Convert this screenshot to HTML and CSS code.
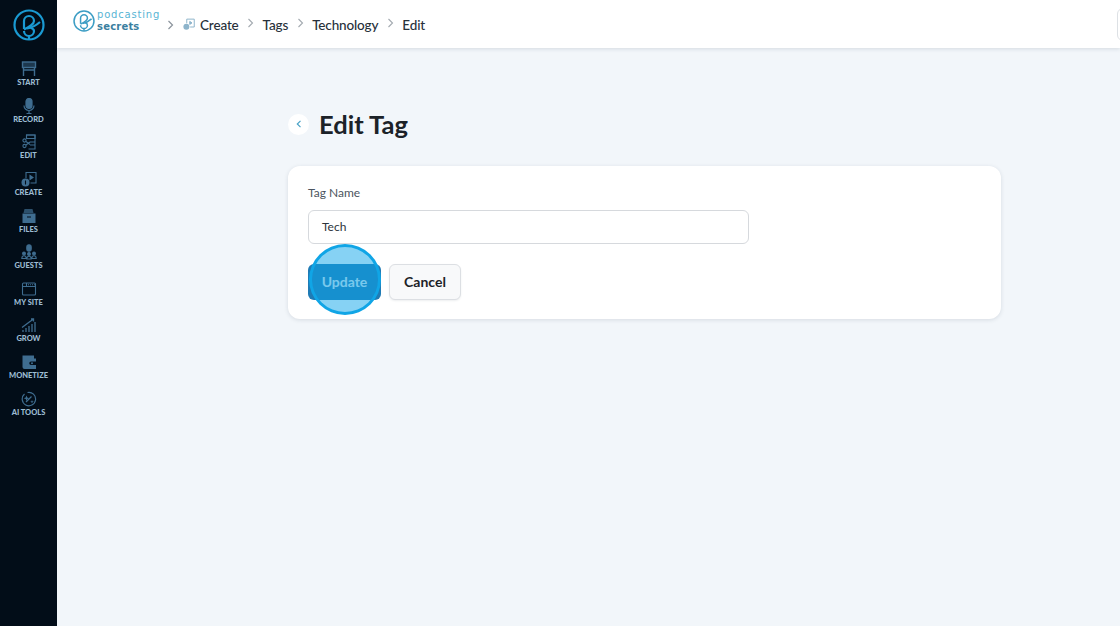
FILE: index.html
```html
<!DOCTYPE html>
<html lang="en">
<head>
<meta charset="utf-8">
<title>Edit Tag</title>
<link rel="stylesheet" href="styles.css">
</head>
<body>
<div class="app">
  <aside class="sidebar">
    <div class="brand">
      <svg width="32" height="32" viewBox="0 0 32 32" fill="none" stroke="#1a9ad2" stroke-width="2.200"><circle cx="16" cy="16" r="14.500"/><path d="M11 20V12a5 5 0 0 1 10 0c0 3.500-5 6-10 8.500"/><path d="M14 19.500c4.500-.5 9-3 13-6.500"/><path d="M11 22a5 5 0 0 0 10 0c0-1.500-1.500-2.800-3.500-3.300"/><path d="M16 27v3"/></svg>
    </div>
    <nav class="nav">
      <a class="nav-item"><svg width="16" height="16" viewBox="0 0 16 16" fill="none" stroke="#3f6d90" stroke-width="1.400"><rect x="1.500" y="1" width="13" height="5.500" fill="#3f6d90" fill-opacity=".45"/><path d="M2.500 6.500V15M13.500 6.500V15M2.500 9h11"/></svg><span>START</span></a>
      <a class="nav-item"><svg width="16" height="16" viewBox="0 0 16 16" fill="none" stroke="#3f6d90" stroke-width="1.200"><rect x="5" y="0.500" width="6" height="10" rx="3" fill="#3f6d90"/><path d="M3 7.500a5 5 0 0 0 10 0M8 12.500V15.500M5.500 15.500h5"/></svg><span>RECORD</span></a>
      <a class="nav-item"><svg width="16" height="16" viewBox="0 0 16 16" fill="none" stroke="#3f6d90" stroke-width="1.100"><path d="M5.500 5V1h8.500v14H7.500"/><path d="M5.500 1h8.500v3.500H5.500zM9 8h5M9 11h5"/><circle cx="3.500" cy="6.500" r="1.600"/><circle cx="3.500" cy="12" r="1.600"/><path d="M5 7.500l4 3M5 11l4-3"/></svg><span>EDIT</span></a>
      <a class="nav-item"><svg width="16" height="16" viewBox="0 0 16 16" fill="none" stroke="#3f6d90" stroke-width="1.100"><path d="M5 7V1.500h10V12H9.500"/><path d="M9 4.500l3 2-3 2z" fill="#3f6d90"/><circle cx="4.500" cy="11.500" r="4" fill="#3f6d90" stroke="none"/><path d="M4.500 9.500v4" stroke="#020d18"/></svg><span>CREATE</span></a>
      <a class="nav-item"><svg width="16" height="16" viewBox="0 0 16 16" fill="#3f6d90"><path d="M3.500 1h8l1 4h-10z" fill-opacity=".7"/><path d="M1.500 5.500h13V15h-13z"/><path d="M6 8.500h4v1H6z" fill="#020d18"/></svg><span>FILES</span></a>
      <a class="nav-item"><svg width="16" height="16" viewBox="0 0 16 16" fill="none" stroke="#3f6d90" stroke-width="1.100"><rect x="5.800" y="0.800" width="4.400" height="6.500" rx="2.200" fill="#3f6d90"/><circle cx="3" cy="9.500" r="1.400" fill="#3f6d90"/><circle cx="13" cy="9.500" r="1.400" fill="#3f6d90"/><circle cx="8" cy="10" r="1.400" fill="#3f6d90"/><path d="M.8 14.500c0-2 1-2.800 2.200-2.800s2.200.8 2.200 2.800zM10.800 14.500c0-2 1-2.800 2.200-2.800s2.200.8 2.200 2.800zM5.800 15c0-2 1-2.800 2.200-2.800s2.200.8 2.200 2.800z"/></svg><span>GUESTS</span></a>
      <a class="nav-item"><svg width="16" height="16" viewBox="0 0 16 16" fill="none" stroke="#3f6d90" stroke-width="1.100"><rect x="1.500" y="2" width="13" height="12" rx="1"/><path d="M1.500 5.500h13M5.500 2v3.500"/><path d="M7 3.700h7" stroke-dasharray="1 1"/></svg><span>MY SITE</span></a>
      <a class="nav-item"><svg width="16" height="16" viewBox="0 0 16 16" fill="none" stroke="#3f6d90" stroke-width="1.300"><path d="M1 10.500L9 4.500l3-2M10 2h2.500v2.500"/><path d="M2 15v-2M5 15v-4M8 15V9M11 15V7M14 15V5"/></svg><span>GROW</span></a>
      <a class="nav-item"><svg width="16" height="16" viewBox="0 0 16 16" fill="#3f6d90"><path d="M1.500 1.500h11.500v3H15V15H3.500a2 2 0 0 1-2-2z"/><path d="M10 7.500h5v3.500h-5a1.700 1.700 0 0 1 0-3.500z" fill="#020d18"/><circle cx="11" cy="9.250" r="1"/></svg><span>MONETIZE</span></a>
      <a class="nav-item"><svg width="16" height="16" viewBox="0 0 16 16" fill="none" stroke="#3f6d90" stroke-width="1.200"><path d="M3.500 3a6.700 6.700 0 1 0 3-1.500"/><path d="M5 11l5.500-5.500"/><path d="M5.500 4.500l.8 2 2 .8-2 .8-.8 2-.8-2-2-.8 2-.8z" fill="#3f6d90" stroke="none"/><path d="M11 9l.5 1.300 1.300.5-1.300.5-.5 1.300-.5-1.300-1.300-.5 1.300-.5z" fill="#3f6d90" stroke="none"/></svg><span>AI TOOLS</span></a>
    </nav>
  </aside>
  <div class="main">
    <header class="topbar">
      <div class="logo">
        <svg width="22" height="22" viewBox="0 0 32 32" fill="none" stroke="#3c9dc4" stroke-width="2.200"><circle cx="16" cy="16" r="14.500"/><path d="M11 20V12a5 5 0 0 1 10 0c0 3.500-5 6-10 8.500"/><path d="M14 19.500c4.500-.5 9-3 13-6.500"/><path d="M11 22a5 5 0 0 0 10 0c0-1.500-1.500-2.800-3.500-3.300"/><path d="M16 27v3"/></svg>
        <div class="logo-text"><span class="logo-top">podcasting</span><span class="logo-bottom">secrets</span></div>
      </div>
      <svg class="chev first" width="7" height="10" viewBox="0 0 7 10" fill="none" stroke="#8b949c" stroke-width="1.200"><path d="M1.500 1l4 4-4 4"/></svg>
      <svg class="crumb-icon" width="12" height="12" viewBox="0 0 16 16" fill="none" stroke="#8db4cb" stroke-width="1.300"><path d="M5 7V1.500h10V12H9.500"/><path d="M9 4.500l3 2-3 2z" fill="#8db4cb"/><circle cx="4.500" cy="11.500" r="4" fill="#8db4cb" stroke="none"/></svg>
      <span class="crumb">Create</span>
      <svg class="chev" width="7" height="10" viewBox="0 0 7 10" fill="none" stroke="#a3aab0" stroke-width="1.100"><path d="M1.500 1l4 4-4 4"/></svg>
      <span class="crumb">Tags</span>
      <svg class="chev" width="7" height="10" viewBox="0 0 7 10" fill="none" stroke="#a3aab0" stroke-width="1.100"><path d="M1.500 1l4 4-4 4"/></svg>
      <span class="crumb">Technology</span>
      <svg class="chev" width="7" height="10" viewBox="0 0 7 10" fill="none" stroke="#a3aab0" stroke-width="1.100"><path d="M1.500 1l4 4-4 4"/></svg>
      <span class="crumb">Edit</span>
      <div class="top-action"></div>
    </header>
    <main class="content">
      <div class="panel">
        <div class="title-row">
          <button class="back" type="button" aria-label="Back"><svg width="6" height="8" viewBox="0 0 6 8" fill="none" stroke="#4aa3c7" stroke-width="1.200"><path d="M4.500 .8L1.300 4l3.200 3.200"/></svg></button>
          <h1>Edit Tag</h1>
        </div>
        <form class="card">
          <label class="field-label">Tag Name</label>
          <div class="input">Tech</div>
          <div class="actions">
            <button class="btn btn-primary" type="button">Update<span class="spot"></span></button>
            <button class="btn btn-secondary" type="button">Cancel</button>
          </div>
        </form>
      </div>
    </main>
  </div>
</div>
</body>
</html>
```
FILE: styles.css
```css
* { box-sizing: border-box; }
html, body { margin: 0; height: 100%; overflow: hidden; }
body { font-family: Lato, "Noto Sans", "Liberation Sans", sans-serif; background: #f2f6fa; color: #1c2228; }
.app { display: flex; height: 626px; width: 1120px; }

.sidebar { width: 57px; flex: none; background: #020d18; display: flex; flex-direction: column; align-items: center; padding-top: 9px; }
.brand { height: 32px; display: flex; margin-bottom: 20px; }
.nav { display: flex; flex-direction: column; width: 100%; }
.nav-item { height: 36.65px; display: flex; flex-direction: column; align-items: center; }
.nav-item svg { display: block; flex: none; }
.nav-item span { font-size: 7.500px; line-height: 10px; margin-top: 1px; font-weight: 900; color: #9dbcd2; white-space: nowrap; }

.main { flex: 1; min-width: 0; display: flex; flex-direction: column; }
.topbar { height: 48px; flex: none; background: #fff; box-shadow: 0 1px 4px rgba(30, 50, 70, .14); display: flex; align-items: center; padding-left: 16px; position: relative; overflow: hidden; }
.logo { display: flex; align-items: center; gap: 2px; margin-top: -7px; }
.logo-text { display: flex; flex-direction: column; font-family: "DejaVu Sans", sans-serif; }
.logo-top { font-size: 10px; line-height: 11.500px; color: #57b4d4; letter-spacing: .8px; }
.logo-bottom { font-size: 10px; line-height: 11.500px; color: #3b7f9f; font-weight: 700; letter-spacing: .2px; }
.chev { flex: none; margin: -3px 8.500px 0; }
.chev.first { margin: 2px 9px 0 7px; }
.crumb-icon { margin-right: 5px; }
.crumb { font-size: 13.500px; font-weight: 500; color: #27303a; margin-top: 1px; letter-spacing: -.15px; }
.top-action { position: absolute; right: -30px; top: 8px; width: 33px; height: 33px; border: 1px solid #dde1e5; border-radius: 6px; }

.content { flex: 1; display: flex; justify-content: flex-start; padding: 59px 0 0 231px; }
.panel { width: 713px; }
.title-row { display: flex; align-items: center; height: 34px; gap: 10px; margin-bottom: 25px; }
.back { width: 21px; height: 21px; padding: 0; border: 0; border-radius: 50%; background: #fff; display: flex; align-items: center; justify-content: center; }
h1 { margin: 0; font-size: 25.500px; line-height: 34px; font-weight: 700; color: #1c2228; }
.card { background: #fff; border-radius: 12px; box-shadow: 0 1px 4px rgba(30, 50, 70, .13); height: 153px; padding: 19px 20px; display: flex; flex-direction: column; align-items: flex-start; }
.field-label { font-size: 12px; line-height: 16px; color: #4b5560; margin-bottom: 9px; }
.input { width: 441px; height: 34px; border: 1px solid #d6d9dd; border-radius: 6px; padding: 0 13px 1px; display: flex; align-items: center; font-size: 12px; color: #2c343c; }
.actions { display: flex; gap: 8px; margin-top: 20px; }
.btn { height: 36px; border-radius: 6px; font-family: inherit; font-size: 14px; font-weight: 700; padding: 0 0 2px; display: flex; align-items: center; justify-content: center; }
.btn-primary { width: 73px; background: #1f7bb5; color: #e3ecf0; border: 0; position: relative; }
.btn-secondary { width: 72px; background: #f8f9fa; border: 1px solid #dcdfe3; color: #1c2228; box-shadow: 0 1px 2px rgba(30, 50, 70, .08); }
.spot { position: absolute; left: .500px; top: -20px; width: 72px; height: 71px; border-radius: 50%; background: rgba(14, 165, 233, .5); border: 3px solid #10a5e6; }
```
